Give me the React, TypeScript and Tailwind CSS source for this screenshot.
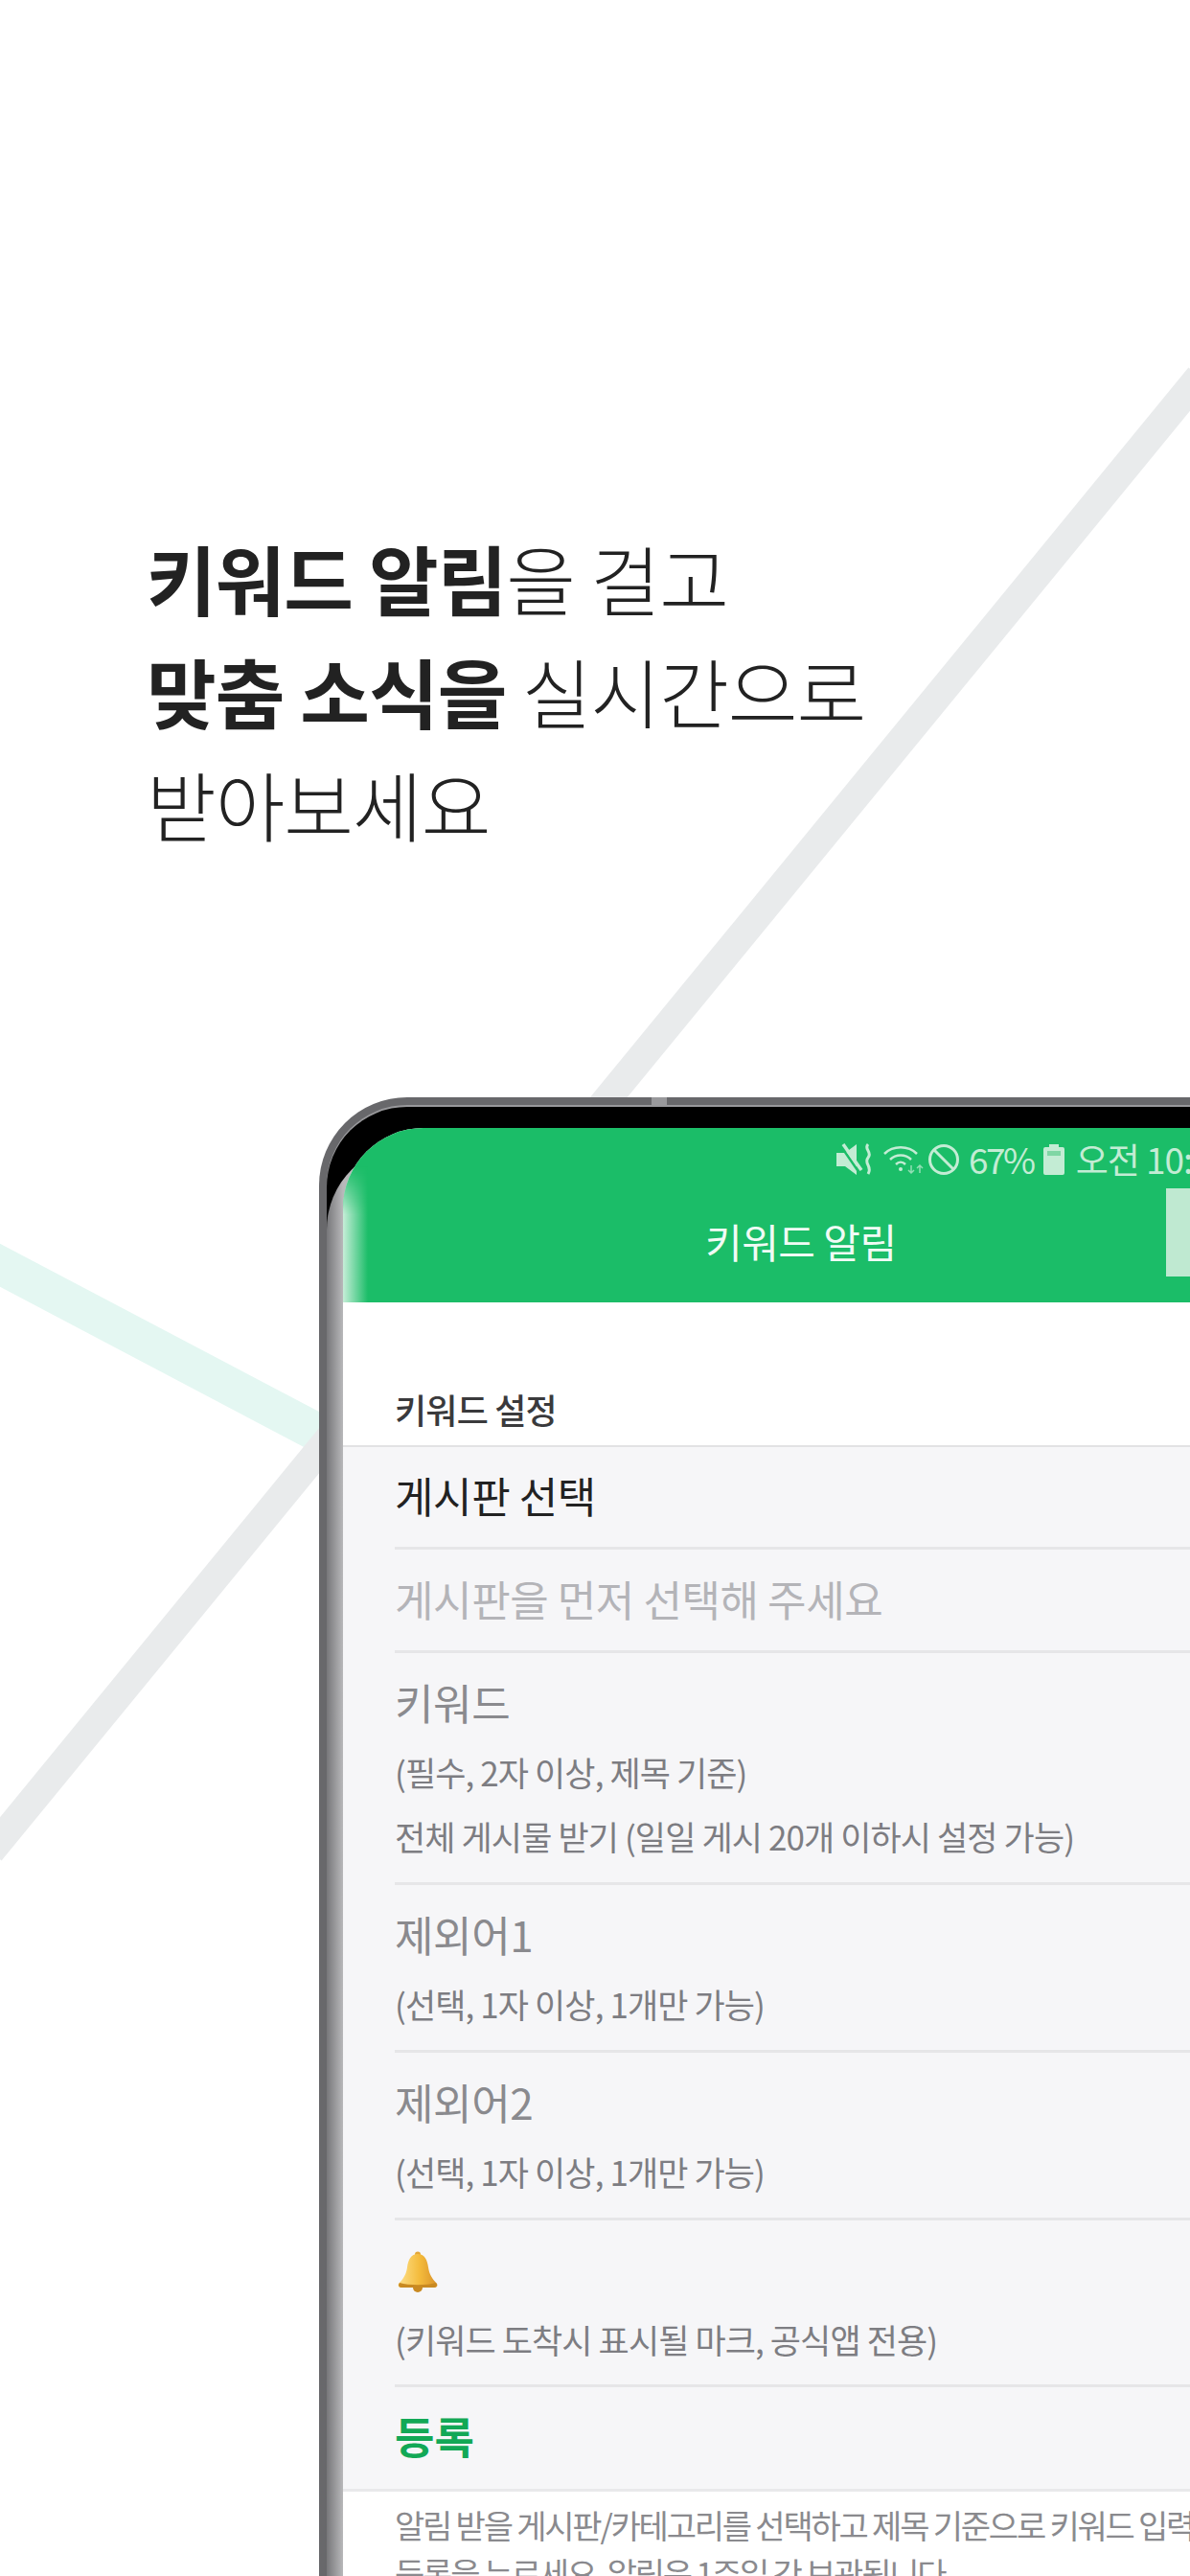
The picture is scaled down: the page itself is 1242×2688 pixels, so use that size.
import React from 'react';

const FONT = "font-['Noto_Sans_CJK_KR','Noto_Sans',sans-serif]";

/* lines behind the phone */
const BackgroundLines = () => (
  <svg className="absolute left-0 top-0" width="1242" height="2688" viewBox="0 0 1242 2688">
    <path d="M-10 1315 L345 1502" stroke="#e4f7f2" strokeWidth="40" fill="none" />
    <path d="M-10 1932 L1252 393" stroke="#e9ebec" strokeWidth="30" fill="none" />
  </svg>
);

const MuteIcon = () => (
  <svg width="40" height="36" viewBox="0 0 40 36" fill="none">
    <path d="M1 11h9l12-9v32l-12-9H1z" fill="#c3ecd4" />
    <path d="M5 3l20 29" stroke="#1bbd68" strokeWidth="2.5" />
    <path d="M8 2l19 27" stroke="#c3ecd4" strokeWidth="3.5" />
    <path d="M34 2c-5 5 5 8 0 14s5 9 0 17" stroke="#c3ecd4" strokeWidth="3" />
  </svg>
);

const WifiIcon = () => (
  <svg width="44" height="32" viewBox="0 0 44 32" fill="none" stroke="#c3ecd4" strokeWidth="2.5">
    <path d="M1 10c9-9 25-9 34 0" />
    <path d="M7 16c6-6 16-6 22 0" />
    <path d="M13 21c3-3 7-3 10 0" />
    <circle cx="18" cy="26" r="2" fill="#c3ecd4" stroke="none" />
    <path d="M29 22v8M26 27l3 3 3-3M38 30v-8M35 25l3-3 3 3" strokeWidth="1.5" opacity="0.7" />
  </svg>
);

const BlockIcon = () => (
  <svg width="34" height="34" viewBox="0 0 34 34" fill="none" stroke="#c3ecd4" strokeWidth="3">
    <circle cx="17" cy="17" r="14.5" />
    <path d="M7 7l20 20" />
  </svg>
);

const BatteryIcon = () => (
  <svg width="22" height="32" viewBox="0 0 22 32">
    <path d="M6 0h10v3h4a2 2 0 0 1 2 2v25a2 2 0 0 1-2 2H2a2 2 0 0 1-2-2V5a2 2 0 0 1 2-2h4z" fill="#c3ecd4" />
    <rect x="4" y="7" width="14" height="5" fill="#7fd6a4" />
  </svg>
);

const BellIcon = () => (
  <svg width="46" height="44" viewBox="0 0 46 44">
    <defs>
      <linearGradient id="bell" x1="0" x2="1" y1="0" y2="0">
        <stop offset="0" stopColor="#fde08a" />
        <stop offset="0.55" stopColor="#f4bb3c" />
        <stop offset="1" stopColor="#d9922a" />
      </linearGradient>
    </defs>
    <circle cx="23" cy="38" r="5" fill="#c98a22" />
    <circle cx="23" cy="3.5" r="3" fill="#e3a83a" />
    <path d="M23 3c7 0 10 6 11 14 1 7 4 12 9 17 1 2 0 4-3 4H6c-3 0-4-2-3-4 5-5 8-10 9-17 1-8 4-14 11-14z" fill="url(#bell)" />
    <path d="M4 33c10 3 28 3 38 0l1 2c-1 2-2 3-3 3H6c-2 0-3-1-3-3z" fill="#c98a22" />
  </svg>
);

const TITLE = 'text-[44px] leading-[56px] tracking-[-0.4px]';
const SUB = 'text-[35px] leading-[67px] tracking-[-0.9px] text-[#7d7d82]';

const Field: React.FC<{ title: string; subs: string[] }> = ({ title, subs }) => (
  <div className="ml-[54px] border-b-[3px] border-[#e6e6e8] pt-[23px] pb-[15px]">
    <div className={`${TITLE} text-[#8a8a8e]`}>{title}</div>
    <div className="mt-[11px]">
      {subs.map((s) => (
        <div key={s} className={SUB}>{s}</div>
      ))}
    </div>
  </div>
);

export default function App() {
  return (
    <div className={`relative w-[1242px] h-[2688px] overflow-hidden bg-white ${FONT}`}>
      <BackgroundLines />

      <div className="relative pl-[153px] pt-[544px] text-[79px] leading-[118px] tracking-[-1px] font-light text-[#222222]">
        <div><span className="font-bold">키워드 알림</span>을 걸고</div>
        <div><span className="font-bold">맞춤 소식을</span> 실시간으로</div>
        <div>받아보세요</div>
      </div>

      {/* phone */}
      <div className="relative ml-[333px] mt-[247px] w-[1100px] overflow-hidden rounded-tl-[92px] bg-[#68686b] pl-[8px] pt-[10px]">
        <div className="absolute left-[347px] top-0 h-[10px] w-[16px] bg-[#98989b]" />
        <div className="relative rounded-tl-[84px] bg-black pl-[17px] pt-[22px] shadow-[0_-2px_0_#98989b]">
          {/* side of the glass, under the screen */}
          <div className="absolute bottom-0 left-0 right-0 top-[40px] rounded-tl-[88px] bg-[linear-gradient(90deg,#77777a,#b8b8ba_17px)]" />
          <div className="relative overflow-hidden rounded-tl-[84px] bg-white">
            {/* app bar */}
            <div className="relative h-[182px] bg-[#1bbd68] text-white">
              <div className="absolute bottom-0 left-0 top-[40px] w-[26px] bg-[linear-gradient(90deg,#c6eed8,#1bbd68)] [mask-image:linear-gradient(180deg,transparent,black_50px)]" />
              <div className="absolute left-[514px] top-[13px] flex h-[40px] items-center whitespace-nowrap text-[#c3ecd4]">
                <MuteIcon />
                <span className="ml-[10px]"><WifiIcon /></span>
                <span className="ml-[2px]"><BlockIcon /></span>
                <span className="ml-[9px] text-[37px] tracking-[-2.5px]">67%</span>
                <span className="ml-[10px]"><BatteryIcon /></span>
                <span className="ml-[12px] text-[37px] tracking-[-1px]">오전 10:</span>
              </div>
              <div className="absolute left-[859px] top-[63px] h-[92px] w-[40px] bg-[#bfe9d1]" />
              <div className="absolute left-[378px] top-[90px] text-[42px] leading-[56px] tracking-[-0.5px] text-[#f0fbf5]">키워드 알림</div>
            </div>

            {/* section header */}
            <div className="border-b-[2px] border-[#e2e2e4] pl-[54px] pt-[90px] pb-[17px] text-[36px] leading-[42px] font-medium tracking-[-0.8px] text-[#3a3a3c]">
              키워드 설정
            </div>

            <div className="bg-[#f6f6f8]">
              <div className={`ml-[54px] border-b-[3px] border-[#e6e6e8] pt-[22px] pb-[26px] ${TITLE} text-[#222222]`}>게시판 선택</div>
              <div className={`ml-[54px] border-b-[3px] border-[#e6e6e8] pt-[23px] pb-[26px] ${TITLE} text-[#b4b4b8]`}>게시판을 먼저 선택해 주세요</div>
              <Field title="키워드" subs={['(필수, 2자 이상, 제목 기준)', '전체 게시물 받기 (일일 게시 20개 이하시 설정 가능)']} />
              <Field title="제외어1" subs={['(선택, 1자 이상, 1개만 가능)']} />
              <Field title="제외어2" subs={['(선택, 1자 이상, 1개만 가능)']} />
              <div className="ml-[54px] border-b-[3px] border-[#e6e6e8] pt-[32px] pb-[14px]">
                <div className="ml-[1px] h-[47px]"><BellIcon /></div>
                <div className={`mt-[11px] ${SUB}`}>(키워드 도착시 표시될 마크, 공식앱 전용)</div>
              </div>
              <div className="border-b-[3px] border-[#e9e9eb]">
                <div className="ml-[54px] pt-[23px] pb-[27px] text-[45px] leading-[56px] font-bold text-[#12a856]">등록</div>
              </div>
            </div>

            <div className="whitespace-nowrap pl-[54px] pt-[10px] text-[34px] leading-[50px] tracking-[-2.2px] text-[#8a8a8e]">
              <div>알림 받을 게시판/카테고리를 선택하고 제목 기준으로 키워드 입력 후</div>
              <div>등록을 누르세요. 알림은 1주일 간 보관됩니다.</div>
              <div className="h-[60px]" />
            </div>
          </div>
        </div>
      </div>
    </div>
  );
}
